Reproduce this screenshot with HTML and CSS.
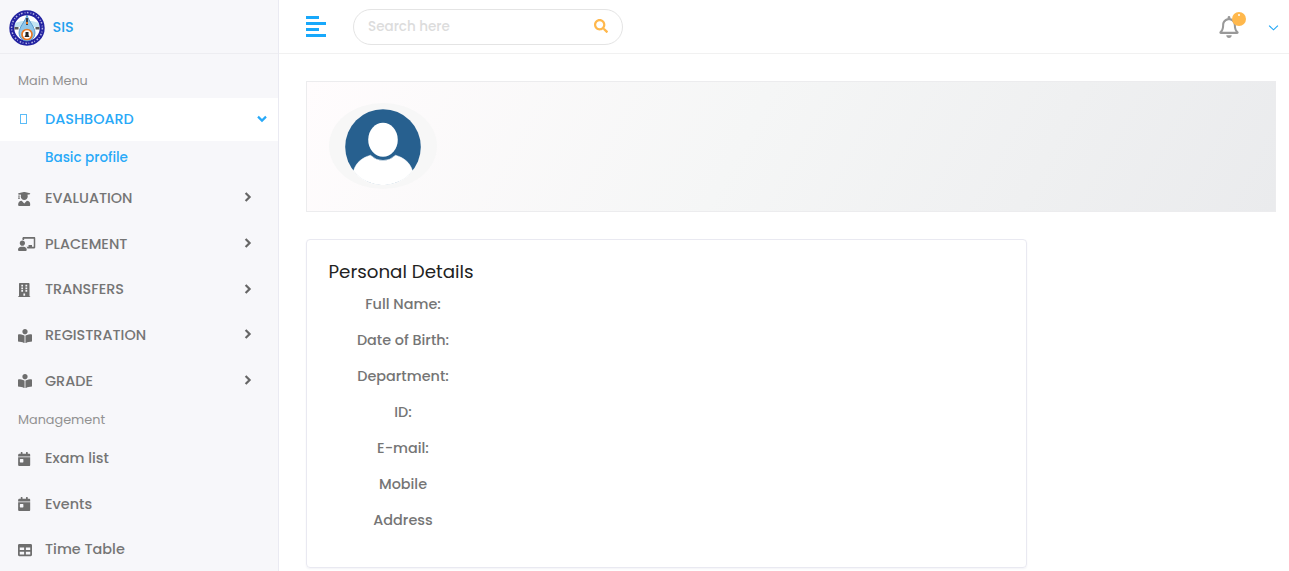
FILE: index.html
```html
<!DOCTYPE html>
<html lang="en">
<head>
<meta charset="utf-8">
<title>SIS</title>
<link rel="stylesheet" href="styles.css">
</head>
<body>
<svg class="defs" aria-hidden="true">
  <symbol id="graduate" viewBox="0 0 448 512"><path d="M319.4 320.6L224 416l-95.4-95.4C57.1 323.7 0 382.2 0 454.4v9.6c0 26.5 21.5 48 48 48h352c26.5 0 48-21.5 48-48v-9.6c0-72.2-57.1-130.7-128.6-133.8zM13.6 79.8l6.4 1.5v58.4c-7 4.2-12 11.5-12 20.3 0 8.4 4.6 15.4 11.1 19.7L3.5 242c-1.7 6.9 2.1 14 7.6 14h41.8c5.5 0 9.3-7.1 7.6-14l-15.6-62.3C51.4 175.4 56 168.4 56 160c0-8.800-5-16.100-12-20.300V87.100l66 15.900c-8.600 17.200-14 36.400-14 57 0 70.700 57.300 128 128 128s128-57.300 128-128c0-20.600-5.300-39.800-14-57l96.300-23.200c18.200-4.400 18.200-27.100 0-31.500l-190.400-46c-13-3.100-26.700-3.100-39.700 0L13.600 48.200c-18.100 4.400-18.100 27.200 0 31.600z"/></symbol>
  <symbol id="teacher" viewBox="0 0 640 512"><path d="M208 352c-2.390 0-4.780.35-7.060 1.090C187.980 357.300 174.350 360 160 360c-14.350 0-27.980-2.700-40.950-6.910-2.280-.74-4.660-1.090-7.050-1.090C49.940 352-.33 402.480 0 464.620.14 490.880 21.730 512 48 512h224c26.270 0 47.860-21.120 48-47.380.33-62.140-49.940-112.620-112-112.620zm-48-32c53.020 0 96-42.980 96-96s-42.980-96-96-96-96 42.980-96 96 42.980 96 96 96zM592 0H208c-26.470 0-48 22.250-48 49.590V96c23.420 0 45.100 6.780 64 17.800V64h352v288h-64v-64H384v64h-76.240c19.100 16.690 33.120 38.730 39.690 64H592c26.470 0 48-22.250 48-49.590V49.590C640 22.250 618.470 0 592 0z"/></symbol>
  <symbol id="building" viewBox="0 0 448 512"><path fill-rule="evenodd" d="M436 480h-20V24c0-13-11-24-24-24H56C43 0 32 11 32 24v456H12c-7 0-12 5-12 12v20h448v-20c0-7-5-12-12-12zM116 64h64v64h-64zM268 64h64v64h-64zM116 160h64v64h-64zM268 160h64v64h-64zM116 256h64v64h-64zM268 256h64v64h-64zM192 384h64v80h-64z"/></symbol>
  <symbol id="reader" viewBox="0 0 512 512"><path d="M352 96c0-53.020-42.980-96-96-96s-96 42.980-96 96 42.980 96 96 96 96-42.980 96-96zM233.590 241.100c-59.330-36.320-155.430-46.300-203.790-49.050C13.550 191.130 0 203.510 0 219.140v222.800c0 14.330 11.590 26.280 26.490 27.050 43.660 2.290 131.990 10.680 193.040 41.430 9.370 4.720 20.480-1.710 20.480-11.870V252.560c-.01-4.670-2.320-8.950-6.420-11.460zm248.610-49.050c-48.350 2.740-144.460 12.730-203.780 49.050-4.100 2.510-6.410 6.960-6.410 11.630v245.790c0 10.190 11.140 16.630 20.540 11.900 61.040-30.720 149.320-39.110 192.970-41.400 14.900-.78 26.490-12.730 26.490-27.060V219.140c-.01-15.630-13.560-28.010-29.810-27.090z"/></symbol>
  <symbol id="calendar" viewBox="0 0 448 512"><path fill-rule="evenodd" d="M0 464c0 26.500 21.500 48 48 48h352c26.500 0 48-21.500 48-48V192H0zM80 256h96c9 0 16 7 16 16v96c0 9-7 16-16 16H80c-9 0-16-7-16-16v-96c0-9 7-16 16-16zM400 64h-48V16c0-9-7-16-16-16h-32c-9 0-16 7-16 16v48H160V16c0-9-7-16-16-16h-32c-9 0-16 7-16 16v48H48C21.500 64 0 85.500 0 112v48h448v-48c0-26.500-21.500-48-48-48z"/></symbol>
  <symbol id="table" viewBox="0 0 512 512"><path fill-rule="evenodd" d="M464 32H48C21.500 32 0 53.500 0 80v352c0 26.500 21.500 48 48 48h416c26.500 0 48-21.500 48-48V80c0-26.500-21.500-48-48-48zM224 416H64v-96h160zm0-160H64v-96h160zm224 160H288v-96h160zm0-160H288v-96h160z"/></symbol>
  <symbol id="chev" viewBox="0 0 8 10"><path d="M1.600 1L5.600 5l-4 4" fill="none" stroke="currentColor" stroke-width="2.200"/></symbol>
</svg>
<div class="layout">
  <aside class="sidebar">
    <div class="brand">
      <svg class="logo" viewBox="0 0 36 36">
        <circle cx="18" cy="18" r="15.200" fill="#fff" stroke="#2222a0" stroke-width="5"/>
        <circle cx="18" cy="18" r="15.400" fill="none" stroke="#b4b4e2" stroke-width="1.500" stroke-dasharray="1.600 2.100 .8 1.500"/>
        <path d="M6 13q12-5 24 0v4H6z" fill="#c4e4f2"/>
        <path d="M18 5c2 7 8 12 8 18a8 8 0 0 1-16 0c0-6 6-11 8-18z" fill="#8fc6ea" stroke="#4289c4" stroke-width=".8"/>
        <path d="M17 8h2v7h-2z" fill="#38404d"/><path d="M17 12h2v2h-2z" fill="#ef7d22"/>
        <path d="M5.500 17h4v2.500h-4zM26.500 17h4v2.500h-4z" fill="#5a5a5a"/>
        <circle cx="18" cy="24.500" r="5" fill="#fff" stroke="#e87825" stroke-width="1.700"/>
        <path d="M16.500 22h3v3l1 2h-5l1-2z" fill="#262626"/>
      </svg>
      <span class="brand-name">SIS</span>
    </div>
    <div class="section first">Main Menu</div>
    <a class="item active"><span class="icon"><i class="box"></i></span><span class="t">DASHBOARD</span>
      <svg class="down" viewBox="0 0 10 8"><path d="M1 1.600l4 4 4-4" fill="none" stroke="currentColor" stroke-width="2.200"/></svg></a>
    <a class="sub"><span class="t">Basic profile</span></a>
    <a class="item"><span class="icon"><svg class="w13"><use href="#graduate"/></svg></span><span class="t">EVALUATION</span><svg class="chev"><use href="#chev"/></svg></a>
    <a class="item"><span class="icon"><svg class="w18"><use href="#teacher"/></svg></span><span class="t">PLACEMENT</span><svg class="chev"><use href="#chev"/></svg></a>
    <a class="item"><span class="icon"><svg class="w13"><use href="#building"/></svg></span><span class="t">TRANSFERS</span><svg class="chev"><use href="#chev"/></svg></a>
    <a class="item"><span class="icon"><svg class="w14"><use href="#reader"/></svg></span><span class="t">REGISTRATION</span><svg class="chev"><use href="#chev"/></svg></a>
    <a class="item"><span class="icon"><svg class="w14"><use href="#reader"/></svg></span><span class="t">GRADE</span><svg class="chev"><use href="#chev"/></svg></a>
    <div class="section">Management</div>
    <a class="item"><span class="icon"><svg class="w13"><use href="#calendar"/></svg></span><span class="t">Exam list</span></a>
    <a class="item"><span class="icon"><svg class="w13"><use href="#calendar"/></svg></span><span class="t">Events</span></a>
    <a class="item"><span class="icon"><svg class="w14"><use href="#table"/></svg></span><span class="t">Time Table</span></a>
  </aside>
  <div class="main">
    <header class="topbar">
      <div class="burger"><i></i><i></i><i></i><i></i></div>
      <div class="search"><span class="placeholder">Search here</span>
        <svg class="lens" viewBox="0 0 512 512"><path d="M505 442.700L405.300 343c-4.500-4.500-10.600-7-17-7H372c27.600-35.300 44-79.700 44-128C416 93.100 322.900 0 208 0S0 93.100 0 208s93.100 208 208 208c48.300 0 92.700-16.400 128-44v16.300c0 6.400 2.500 12.500 7 17l99.700 99.700c9.400 9.400 24.600 9.400 33.900 0l28.300-28.300c9.400-9.400 9.400-24.600.1-34zM208 336c-70.700 0-128-57.200-128-128 0-70.700 57.200-128 128-128 70.700 0 128 57.200 128 128 0 70.700-57.200 128-128 128z"/></svg>
      </div>
      <div class="bell">
        <svg viewBox="0 0 448 512"><path d="M439.390 362.290c-19.320-20.760-55.470-51.990-55.470-154.290 0-77.700-54.480-139.900-127.940-155.160V32c0-17.670-14.320-32-31.980-32s-31.980 14.330-31.980 32v20.840C118.560 68.100 64.080 130.300 64.080 208c0 102.300-36.150 133.530-55.470 154.290-6 6.450-8.660 14.160-8.610 21.710.11 16.400 12.980 32 32.100 32h383.800c19.120 0 32-15.600 32.100-32 .05-7.550-2.610-15.270-8.610-21.710zM67.530 368c21.220-27.970 44.420-74.330 44.530-159.420 0-.2-.06-.38-.06-.58 0-61.860 50.140-112 112-112s112 50.140 112 112c0 .2-.06.38-.06.58.11 85.100 23.310 131.460 44.530 159.420H67.530zM224 512c35.320 0 63.970-28.650 63.970-64H160.030c0 35.350 28.650 64 63.970 64z"/></svg>
        <span class="badge"></span>
      </div>
      <svg class="caret" viewBox="0 0 12 8"><path d="M1.200 1.300L6 6l4.800-4.700" fill="none" stroke="#22a7f5" stroke-width="1.200"/></svg>
    </header>
    <main class="content">
      <section class="banner">
        <div class="avatar">
          <svg viewBox="0 0 76 76"><circle cx="38" cy="38" r="37.800" fill="#27608f"/>
            <path fill="#fff" stroke="#fff" stroke-width=".5" d="M8.500 62C11 53 18 48.300 25.500 46.300Q31 51.500 38 51.500T50.500 46.300C58 48.300 65 53 67.500 62A38 38 0 0 1 8.500 62z"/>
            <ellipse cx="38" cy="30.700" rx="14.800" ry="17" fill="#fff"/></svg>
        </div>
      </section>
      <section class="card">
        <h2>Personal Details</h2>
        <div class="fields">
          <span>Full Name:</span><span>Date of Birth:</span><span>Department:</span><span>ID:</span><span>E-mail:</span><span>Mobile</span><span>Address</span>
        </div>
      </section>
    </main>
  </div>
</div>
</body>
</html>
```
FILE: styles.css
```css
* { box-sizing: border-box; }
body { margin: 0; height: 571px; overflow: hidden; background: #fff; color: #757575; font: 500 14.4px/20px Poppins, Inter, sans-serif; }
.defs { display: none; }
.layout { display: flex; height: 571px; }
svg { fill: currentColor; flex: none; }
.sidebar { width: 279px; flex: none; background: #f7f7fa; border-right: 1px solid #eaeaf2; }
.brand { height: 54px; border-bottom: 1px solid #ededf1; display: flex; align-items: center; padding: 2px 0 0 9px; }
.logo { width: 36px; height: 36px; }
.brand-name { margin: -2px 0 0 7.500px; color: #22a0ee; }
.section { height: 31.700px; padding: 1px 0 0 18px; line-height: 32px; font-size: 12.800px; font-weight: 400; color: #929292; }
.section.first { height: 44px; padding-top: 11px; }
.item { display: flex; align-items: center; height: 45.700px; padding: 0 26.500px 0 18px; }
.item.active { height: 43px; background: #fff; color: #28a9f8; padding: 0 11.500px 1px 18px; }
.icon { width: 27px; display: flex; padding-top: 1.500px; color: #6e6e6e; }
.active .icon { padding-top: 0; }
.icon svg { height: 14px; }
.w13 { width: 12.500px; }
.w14 { width: 14px; }
.w18 { width: 17.500px; }
.box { width: 7px; height: 10px; border: 1px solid #5cbcf7; margin-left: 2px; }
.t { flex: 1; }
.chev { width: 8px; height: 10px; margin-top: -1px; color: #666; }
.down { width: 10px; height: 8px; }
.sub { display: flex; height: 34px; align-items: center; padding-left: 45px; color: #28a9f8; }
.sub .t { font-size: 13.500px; }
.main { flex: 1; }
.topbar { height: 54px; border-bottom: 1px solid #f1f1f1; display: flex; align-items: center; padding: 0 10px 0 27px; }
.burger { display: flex; flex-direction: column; gap: 3px; width: 20px; margin-right: 27px; }
.burger i { height: 3px; width: 20px; background: #18a8fb; }
.burger i:nth-child(odd) { width: 13px; }
.search { width: 270px; height: 36px; border: 1px solid #e4e4e4; border-radius: 18px; display: flex; align-items: center; justify-content: space-between; padding: 0 14px 1px 14px; }
.placeholder { font-size: 13.500px; padding-top: 2px; color: #dcdcdc; }
.lens { width: 14px; height: 14px; margin-top: -1px; fill: #ffb84c; }
.bell { position: relative; width: 20px; height: 23px; margin: 1px 29px 0 auto; color: #999; }
.bell svg { width: 20px; height: 22px; }
.badge { position: absolute; left: 12.500px; top: -4px; width: 14px; height: 14px; border-radius: 50%; background: #ffb84c; }
.badge::after { content: ""; position: absolute; left: 6px; top: 2px; width: 2px; height: 2px; border-radius: 1px; background: #fff; }
.caret { width: 11px; height: 8px; margin-top: 2px; }
.content { padding: 27px 13px 0 27px; }
.banner { height: 131px; border: 1px solid #ececee; background: linear-gradient(118deg, #fffcfd 0%, #f5f6f6 45%, #eff0f1 75%, #eaebed 100%); padding: 21px 22px; }
.avatar { width: 108px; height: 86px; border-radius: 50%; background: #f7f7f7; display: flex; justify-content: center; align-items: center; }
.avatar svg { width: 76px; height: 76px; margin-top: 1px; }
.card { margin-top: 27px; width: 721px; height: 329px; border: 1px solid #e9e9f1; border-radius: 4px; padding: 19px 21.500px; box-shadow: 0 1px 2px #f3f3f7; }
h2 { margin: 0 0 1px; font-size: 18.250px; line-height: 26px; font-weight: 400; color: #222; }
.fields { width: 149px; display: flex; flex-direction: column; align-items: center; }
.fields span { line-height: 36px; }
```
